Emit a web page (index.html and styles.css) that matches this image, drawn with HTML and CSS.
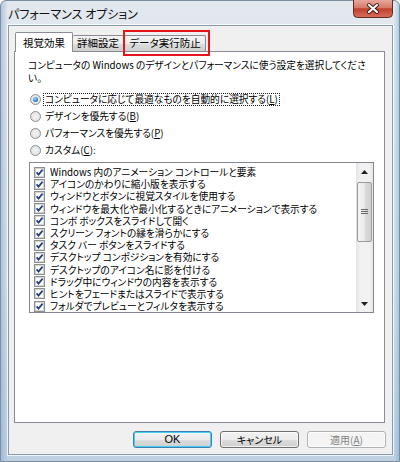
FILE: index.html
```html
<!DOCTYPE html>
<html lang="ja">
<head>
<meta charset="utf-8">
<link rel="stylesheet" href="styles.css">
</head>
<body>
<svg width="0" height="0" class="defs">
  <defs>
    <symbol id="chk" viewBox="0 0 11 11">
      <rect x="0.5" y="0.5" width="10" height="10" fill="#f4f4f4" stroke="#8e8f8f"/>
      <rect x="1.5" y="1.5" width="8" height="8" fill="#fff" stroke="#d4d4d4"/>
      <path d="M2.6 5.4 L4.5 7.6 L8.6 2.6" fill="none" stroke="#1e3f82" stroke-width="1.7"/>
    </symbol>
  </defs>
</svg>
<div class="window">
  <div class="titlebar">
    <span class="title">パフォーマンス オプション</span>
    <div class="close">
      <svg width="40" height="18" viewBox="0 0 40 18">
        <defs>
          <linearGradient id="cg" x1="0" y1="0" x2="0" y2="1">
            <stop offset="0" stop-color="#e8a89c"/>
            <stop offset="0.45" stop-color="#d47a68"/>
            <stop offset="0.5" stop-color="#c0402c"/>
            <stop offset="1" stop-color="#d8705a"/>
          </linearGradient>
        </defs>
        <path d="M0.5 0 V13.5 Q0.5 17.5 4.5 17.5 H35.5 Q39.5 17.5 39.5 13.5 V0" fill="url(#cg)" stroke="#5e2a22"/>
        <path d="M16 5 L24 12 M24 5 L16 12" stroke="#3a1a14" stroke-width="4" stroke-linecap="round"/>
        <path d="M16 5 L24 12 M24 5 L16 12" stroke="#fff" stroke-width="2.2" stroke-linecap="round"/>
      </svg>
    </div>
  </div>
  <div class="client">
    <div class="tabs">
      <div class="tab active t1">視覚効果</div>
      <div class="tab t2">詳細設定</div>
      <div class="tab t3">データ実行防止</div>
    </div>
    <div class="highlight"></div>
    <div class="panel">
      <p class="desc">コンピュータの Windows のデザインとパフォーマンスに使う設定を選択してくださ<br>い。</p>
      <div class="radios">
        <div class="radio-row"><span class="radio on"></span><span class="rlabel focus">コンピュータに応じて最適なものを自動的に選択する(<u>L</u>)</span></div>
        <div class="radio-row"><span class="radio"></span><span class="rlabel">デザインを優先する(<u>B</u>)</span></div>
        <div class="radio-row"><span class="radio"></span><span class="rlabel">パフォーマンスを優先する(<u>P</u>)</span></div>
        <div class="radio-row"><span class="radio"></span><span class="rlabel">カスタム(<u>C</u>):</span></div>
      </div>
      <div class="listbox">
        <div class="items">
          <div class="item"><svg class="cb"><use href="#chk"/></svg><span>Windows 内のアニメーション コントロールと要素</span></div>
          <div class="item"><svg class="cb"><use href="#chk"/></svg><span>アイコンのかわりに縮小版を表示する</span></div>
          <div class="item"><svg class="cb"><use href="#chk"/></svg><span>ウィンドウとボタンに視覚スタイルを使用する</span></div>
          <div class="item"><svg class="cb"><use href="#chk"/></svg><span>ウィンドウを最大化や最小化するときにアニメーションで表示する</span></div>
          <div class="item"><svg class="cb"><use href="#chk"/></svg><span>コンボ ボックスをスライドして開く</span></div>
          <div class="item"><svg class="cb"><use href="#chk"/></svg><span>スクリーン フォントの縁を滑らかにする</span></div>
          <div class="item"><svg class="cb"><use href="#chk"/></svg><span>タスク バー ボタンをスライドする</span></div>
          <div class="item"><svg class="cb"><use href="#chk"/></svg><span>デスクトップ コンポジションを有効にする</span></div>
          <div class="item"><svg class="cb"><use href="#chk"/></svg><span>デスクトップのアイコン名に影を付ける</span></div>
          <div class="item"><svg class="cb"><use href="#chk"/></svg><span>ドラッグ中にウィンドウの内容を表示する</span></div>
          <div class="item"><svg class="cb"><use href="#chk"/></svg><span>ヒントをフェードまたはスライドで表示する</span></div>
          <div class="item"><svg class="cb"><use href="#chk"/></svg><span>フォルダでプレビューとフィルタを表示する</span></div>
        </div>
        <div class="scrollbar">
          <div class="sb-btn"><svg width="7" height="4" viewBox="0 0 7 4"><path d="M0 4 L3.5 0 L7 4 Z" fill="#222"/></svg></div>
          <div class="thumb"><svg width="7" height="6" viewBox="0 0 7 6"><path d="M0 0.5 H7 M0 2.5 H7 M0 4.5 H7" stroke="#666" stroke-width="1"/></svg></div>
          <div class="track"></div>
          <div class="sb-btn"><svg width="7" height="4" viewBox="0 0 7 4"><path d="M0 0 L7 0 L3.5 4 Z" fill="#222"/></svg></div>
        </div>
      </div>
    </div>
    <div class="buttons">
      <div class="btn default">OK</div>
      <div class="btn">キャンセル</div>
      <div class="btn disabled">適用(<u>A</u>)</div>
    </div>
  </div>
</div>
</body>
</html>
```
FILE: styles.css
```css
html, body {
  margin: 0;
  padding: 0;
}
body {
  width: 400px;
  height: 462px;
  overflow: hidden;
  background: #fff;
  font-family: "Noto Sans CJK JP", "Noto Sans", sans-serif;
  font-feature-settings: "palt";
  color: #000;
}
.defs {
  position: absolute;
}
.window {
  position: relative;
  width: 400px;
  height: 462px;
  box-sizing: border-box;
  padding: 0 6px 6px 7px;
  background:
    linear-gradient(90deg, rgba(120,160,200,0.45) 0, rgba(255,255,255,0) 7px, rgba(255,255,255,0) 393px, rgba(90,170,210,0.55) 400px),
    linear-gradient(180deg, #e2e8ee 0%, #d7e0e9 60%, #bfd0e2 100%);
  border: 1px solid #7d8ea1;
  border-radius: 6px 6px 0 0;
  display: flex;
  flex-direction: column;
}
.titlebar {
  height: 24px;
  display: flex;
  align-items: flex-start;
  justify-content: space-between;
  margin: 0 -6px 0 0;
}
.title {
  font-size: 12px;
  line-height: 12px;
  padding-top: 7px;
  color: #111;
}
.close {
  width: 40px;
  height: 18px;
  margin-right: 6px;
  margin-top: -1px;
}
.close svg {
  display: block;
}
.client {
  position: relative;
  flex: 1;
  background: #f0f0f0;
  border: 1px solid #8a9bae;
  box-shadow: 0 0 0 1px rgba(255,255,255,0.75);
  display: flex;
  flex-direction: column;
}
.tabs {
  display: flex;
  align-items: flex-end;
  height: 19px;
  margin: 6px 0 0 6px;
  position: relative;
  z-index: 2;
}
.tab {
  box-sizing: border-box;
  height: 16px;
  border: 1px solid #898c95;
  border-bottom: none;
  background: linear-gradient(180deg, #f3f3f3 0%, #ebebeb 50%, #dddddd 51%, #cfcfcf 100%);
  font-size: 10.5px;
  line-height: 14px;
  text-align: center;
  border-radius: 2px 2px 0 0;
  white-space: nowrap;
}
.tab.active {
  height: 20px;
  margin-bottom: -1px;
  padding-top: 3px;
  background: #fff;
}
.t1 { width: 58px; }
.t2 { width: 51px; border-left: none; }
.t3 { width: 82px; border-left: 1px solid #898c95; }
.highlight {
  position: absolute;
  left: 114px;
  top: 4px;
  width: 87px;
  height: 26px;
  box-sizing: border-box;
  border: 2px solid #e8141b;
  z-index: 3;
}
.panel {
  box-sizing: border-box;
  width: 371px;
  height: 372px;
  margin-left: 5px;
  background: #fff;
  border: 1px solid #898c95;
  position: relative;
  z-index: 1;
}
.desc {
  margin: 0;
  padding: 7px 0 0 13px;
  font-size: 9.7px;
  line-height: 13px;
  white-space: nowrap;
}
.radios {
  margin-top: 6px;
}
.radio-row {
  height: 17px;
  display: flex;
  align-items: center;
  padding-left: 15px;
  font-size: 9.7px;
}
.radio {
  box-sizing: border-box;
  width: 11px;
  height: 11px;
  border-radius: 50%;
  border: 1px solid #8c8e90;
  background: radial-gradient(circle at 50% 50%, #f4f4f4 0%, #e6e6e6 60%, #d8d8d8 100%);
  margin-right: 2px;
  display: flex;
  align-items: center;
  justify-content: center;
}
.radio.on::after {
  content: "";
  width: 5px;
  height: 5px;
  border-radius: 50%;
  background: radial-gradient(circle at 40% 35%, #a9dcff 0%, #3c8ad6 50%, #154f96 100%);
}
.rlabel {
  padding: 0 1px;
  line-height: 11px;
  border: 1px dotted transparent;
}
.rlabel.focus {
  border-color: #222;
}
.listbox {
  box-sizing: border-box;
  width: 345px;
  height: 151px;
  margin: 3px 0 0 14px;
  border: 1px solid #828790;
  display: flex;
  overflow: hidden;
}
.items {
  flex: 1;
  padding-top: 3px;
  overflow: hidden;
}
.item {
  height: 12.2px;
  line-height: 12px;
  display: flex;
  align-items: center;
  padding-left: 4px;
  font-size: 9.7px;
  white-space: nowrap;
  overflow: hidden;
}
.cb {
  width: 11px;
  height: 11px;
  margin-right: 5px;
  flex: none;
}
.scrollbar {
  width: 17px;
  display: flex;
  flex-direction: column;
  background: linear-gradient(90deg, #e3e3e3 0%, #f2f2f2 25%, #f2f2f2 75%, #e6e6e6 100%);
}
.sb-btn {
  height: 17px;
  display: flex;
  align-items: center;
  justify-content: center;
  flex: none;
}
.sb-btn svg {
  display: block;
}
.thumb {
  box-sizing: border-box;
  height: 60px;
  margin: 2px 1px 0;
  border: 1px solid #9a9a9a;
  border-radius: 2px;
  background: linear-gradient(90deg, #f4f4f4 0%, #eaeaea 50%, #dadada 51%, #d0d0d0 100%);
  display: flex;
  align-items: center;
  justify-content: center;
  flex: none;
}
.thumb svg {
  display: block;
}
.track {
  flex: 1;
}
.buttons {
  display: flex;
  justify-content: flex-end;
  gap: 8px;
  margin-top: 8px;
  padding-right: 6px;
}
.btn {
  box-sizing: border-box;
  width: 79px;
  height: 17px;
  border: 1px solid #707070;
  border-radius: 3px;
  background: linear-gradient(180deg, #f2f2f2 0%, #ebebeb 50%, #dddddd 51%, #cfcfcf 100%);
  font-size: 10px;
  line-height: 15px;
  text-align: center;
  box-shadow: inset 0 0 0 1px rgba(255,255,255,0.7);
}
.btn.default {
  border-color: #3c7fb1;
  box-shadow: inset 0 0 0 1px #48d0f4;
  font-family: "Liberation Sans", "Noto Sans CJK JP", sans-serif;
  font-size: 11px;
}
.btn.disabled {
  border-color: #adb2b5;
  background: #f4f4f4;
  color: #838383;
}
```
